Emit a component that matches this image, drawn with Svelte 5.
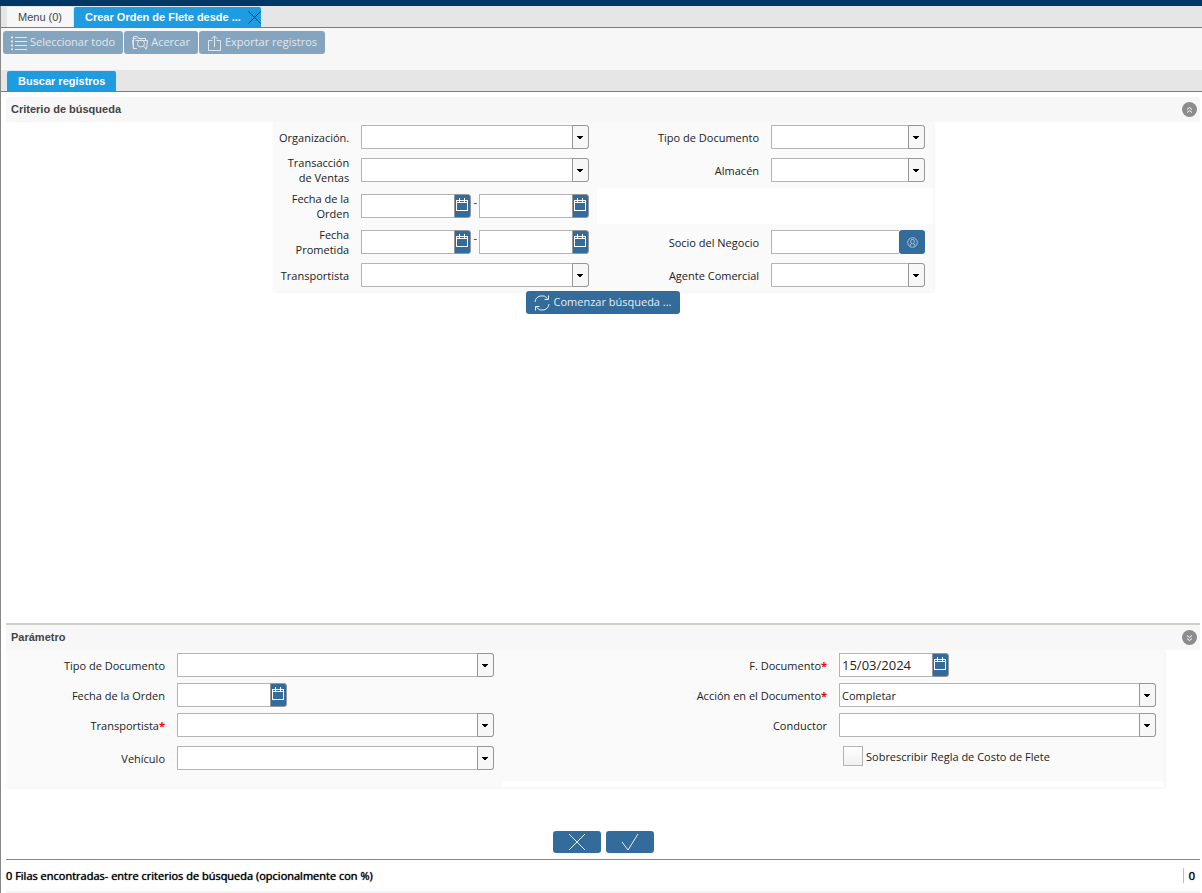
<script lang="ts">
  type Kind = 'select' | 'date' | 'range' | 'lookup' | 'check' | 'none';

  interface Field {
    id: string;
    kind: Kind;
    label: string;
    required?: boolean;
    value?: string;
  }

  // Listed row by row: left field, right field
  const criteria: Field[] = [
    { id: 'org', kind: 'select', label: 'Organización.' },
    { id: 'doctype', kind: 'select', label: 'Tipo de Documento' },
    { id: 'sales', kind: 'select', label: 'Transacción de Ventas' },
    { id: 'warehouse', kind: 'select', label: 'Almacén' },
    { id: 'ordered', kind: 'range', label: 'Fecha de la Orden' },
    { id: 'blank', kind: 'none', label: '' },
    { id: 'promised', kind: 'range', label: 'Fecha Prometida' },
    { id: 'partner', kind: 'lookup', label: 'Socio del Negocio' },
    { id: 'shipper', kind: 'select', label: 'Transportista' },
    { id: 'agent', kind: 'select', label: 'Agente Comercial' }
  ];

  const parameters: Field[] = [
    { id: 'p-doctype', kind: 'select', label: 'Tipo de Documento' },
    { id: 'p-docdate', kind: 'date', label: 'F. Documento', required: true, value: '15/03/2024' },
    { id: 'p-ordered', kind: 'date', label: 'Fecha de la Orden' },
    { id: 'p-action', kind: 'select', label: 'Acción en el Documento', required: true, value: 'Completar' },
    { id: 'p-shipper', kind: 'select', label: 'Transportista', required: true },
    { id: 'p-driver', kind: 'select', label: 'Conductor' },
    { id: 'p-vehicle', kind: 'select', label: 'Vehículo' },
    { id: 'p-override', kind: 'check', label: 'Sobrescribir Regla de Costo de Flete' }
  ];
</script>

{#snippet dateBox(id: string, value: string, label: string)}
  <div class="date-box">
    <input {id} type="text" {value} aria-label={label} />
    <button type="button" aria-label="Calendario">
      <svg width="12" height="13" viewBox="0 0 12 13" fill="none" stroke="currentColor" shape-rendering="crispEdges">
        <path d="M.5 2.500h11v10H.5zM1 4.500h10M3.500 0v4M8.500 0v4" />
      </svg>
    </button>
  </div>
{/snippet}

{#snippet fieldCells(f: Field)}
  {#if f.kind === 'none'}
    <div class="blank"></div>
  {:else if f.kind === 'check'}
    <div></div>
    <div class="cell check">
      <input id={f.id} type="checkbox" />
      <label for={f.id}>{f.label}</label>
    </div>
  {:else}
    <label class="caption" for={f.id}>{f.label}{#if f.required}<span class="required">*</span>{/if}</label>
    <div class="cell">
      {#if f.kind === 'select'}
        <div class="combo">
          <select id={f.id}>
            <option>{f.value ?? ''}</option>
          </select>
          <span class="arrow">
            <svg width="6" height="3" viewBox="0 0 6 3" shape-rendering="crispEdges"><path d="M0 0h6v1H5v1H4v1H2V2H1V1H0z" /></svg>
          </span>
        </div>
      {:else if f.kind === 'range'}
        <div class="range">
          {@render dateBox(f.id, '', f.label)}
          <span>-</span>
          {@render dateBox(f.id + '-to', '', f.label)}
        </div>
      {:else if f.kind === 'date'}
        {@render dateBox(f.id, f.value ?? '', f.label)}
      {:else}
        <div class="lookup">
          <input id={f.id} type="text" />
          <button type="button" aria-label="Buscar socio">
            <svg width="11" height="11" viewBox="0 0 11 11" fill="none" stroke="currentColor">
              <circle cx="5.5" cy="5.5" r="4.8" />
              <path d="M3.2 9.4V7.7l1.3-.8M7.8 9.4V7.7l-1.3-.8" />
              <rect x="3.8" y="2.4" width="3.4" height="4.4" rx="1.5" />
            </svg>
          </button>
        </div>
      {/if}
    </div>
  {/if}
{/snippet}

<div class="app">
  <div class="top-bar"></div>
  <div class="window">
    <nav class="tabs">
      <button type="button" class="tab">Menu (0)</button>
      <div class="tab active closable">
        <button type="button" class="tab-title">Crear Orden de Flete desde ...</button>
        <button type="button" class="close" aria-label="Cerrar">
          <svg width="13" height="13" viewBox="0 0 13 13" stroke="#0b2c45" fill="none"><path d="M.5.5l12 12M12.5.5l-12 12" /></svg>
        </button>
      </div>
    </nav>

    <div class="toolbar">
      <button type="button" class="btn" disabled>
        <svg width="16" height="14" viewBox="0 0 16 14" fill="none" stroke="currentColor">
          <path d="M4 1.5h12M4 5.5h12M4 9.5h12M4 13.5h12" />
          <path d="M0 1.5h3M0 5.5h3M0 9.5h3M0 13.5h3" stroke-width="2" stroke-dasharray="2 1" />
        </svg>
        Seleccionar todo
      </button>
      <button type="button" class="btn" disabled>
        <svg width="16" height="15" viewBox="0 0 16 15" fill="none" stroke="currentColor">
          <path d="M5 13.500H1.500V1.500h4l1 2h7v2M.5 3.500h4M3.500 5.500h12l-1 8h-1M.5 5l1 8.500" />
          <circle cx="9" cy="8.500" r="3.500" />
          <path d="M11.500 11l3 3.500" />
        </svg>
        Acercar
      </button>
      <button type="button" class="btn" disabled>
        <svg width="15" height="16" viewBox="0 0 15 16" fill="none" stroke="currentColor">
          <path d="M5.500 5.500h-4v10h12v-10h-4M7.500 12V1M4.500 4l3-3 3 3" />
        </svg>
        Exportar registros
      </button>
    </div>

    <nav class="tabs">
      <button type="button" class="tab active">Buscar registros</button>
    </nav>

    <main>
      <section class="search">
        <header>
          <h2>Criterio de búsqueda</h2>
          <button type="button" class="toggle" aria-label="Contraer">
            <svg width="7" height="8" viewBox="0 0 7 8" fill="none" stroke="#fff"><path d="M1 3.500l2.500-2 2.500 2M1 6.500l2.500-2 2.500 2" /></svg>
          </button>
        </header>
        <div class="panel criteria">
          {#each criteria as f (f.id)}
            {@render fieldCells(f)}
          {/each}
        </div>
        <button type="button" class="btn start">
          <svg width="16" height="16" viewBox="0 0 16 16" fill="none" stroke="currentColor">
            <path d="M1 7a7 7 0 0 1 12.500-3.500M15 9a7 7 0 0 1-12.500 3.500M14.500.5v4h-4M1.500 15.500v-4h4" />
          </svg>
          Comenzar búsqueda ...
        </button>
      </section>

      <section class="params">
        <header>
          <h2>Parámetro</h2>
          <button type="button" class="toggle" aria-label="Contraer">
            <svg width="7" height="8" viewBox="0 0 7 8" fill="none" stroke="#fff"><path d="M1 1.500l2.500 2 2.500-2M1 4.500l2.500 2 2.500-2" /></svg>
          </button>
        </header>
        <div class="panel parameters">
          {#each parameters as f (f.id)}
            {@render fieldCells(f)}
          {/each}
          <div class="blank"></div>
        </div>
      </section>

      <div class="actions">
        <button type="button" class="btn" aria-label="Cancelar">
          <svg width="18" height="18" viewBox="0 0 18 18" fill="none" stroke="currentColor"><path d="M1 1l16 16M17 1L1 17" /></svg>
        </button>
        <button type="button" class="btn" aria-label="Aceptar">
          <svg width="18" height="18" viewBox="0 0 18 18" fill="none" stroke="currentColor"><path d="M1 9l6 8L17 1" /></svg>
        </button>
      </div>
    </main>

    <footer>
      <span>0 Filas encontradas- entre criterios de búsqueda (opcionalmente con %)</span>
      <span class="count">0</span>
    </footer>
  </div>
</div>

<style>
  :global(body) {
    margin: 0;
    background: #fff;
  }

  .app {
    display: flex;
    flex-direction: column;
    min-height: 100vh;
    font: 11px/15px 'Open Sans', sans-serif;
    color: #222;
  }

  .app * {
    box-sizing: border-box;
  }

  button,
  input,
  select {
    margin: 0;
    padding: 0;
    border: 0;
    border-radius: 0;
    background: none;
    font: inherit;
    color: inherit;
  }

  svg {
    display: block;
    flex: none;
  }

  .top-bar {
    height: 6px;
    background: #003764;
  }

  .window {
    flex: 1;
    display: flex;
    flex-direction: column;
    border-left: 1px solid #888;
  }

  .tabs {
    display: flex;
    gap: 1px;
    height: 22px;
    padding: 1px 0 0 6px;
    background: #e6e6e6;
    border-bottom: 1px solid #2a94d6;
  }

  .tab {
    padding: 0 11px;
    background: #f7f7f7;
    font-family: 'Liberation Sans', Arial, sans-serif;
    color: #444;
  }

  .tab.active {
    background: #1f9be0;
    border-radius: 2px 2px 0 0;
    font-weight: bold;
    color: #fff;
  }

  .closable {
    display: flex;
    align-items: center;
    gap: 7px;
    padding-right: 0;
  }

  .toolbar {
    display: flex;
    align-items: flex-start;
    gap: 1px;
    height: 42px;
    padding: 3px 2px;
    background: #f7f7f7;
  }

  .btn {
    display: flex;
    align-items: center;
    justify-content: center;
    gap: 3px;
    height: 23px;
    padding: 0 8px 2px;
    border-radius: 3px;
    background: #336b9b;
    color: #e6eef5;
  }

  .btn svg {
    margin-top: 2px;
  }

  .btn:disabled {
    background: #85a4be;
    color: #e0e8ef;
  }

  main {
    flex: 1;
    display: flex;
    flex-direction: column;
    padding: 5px 2px 6px 5px;
  }

  .search {
    flex: 1;
    display: flex;
    flex-direction: column;
    align-items: center;
    padding-bottom: 16px;
  }

  header {
    display: flex;
    align-items: center;
    justify-content: space-between;
    width: 100%;
    height: 25px;
    padding: 0 3px 0 5px;
    background: #f7f7f7;
  }

  h2 {
    margin: 0;
    font: bold 11px/15px 'Liberation Sans', Arial, sans-serif;
    color: #444;
  }

  .toggle {
    display: flex;
    align-items: center;
    justify-content: center;
    width: 15px;
    height: 15px;
    border-radius: 50%;
    background: #8c8c8c;
  }

  .panel {
    display: grid;
    align-items: center;
    background: #fafafa;
    box-shadow: 1px 1px 3px #f0f0f0;
  }

  .criteria {
    grid-template-columns: 88fr 236fr 174fr 162fr;
    width: 55%;
    min-width: 660px;
    padding-bottom: 1px;
  }

  .parameters {
    grid-template-columns: 171fr 325fr 337fr 325fr;
    margin-right: 36px;
  }

  .caption {
    padding: 3px 12px 3px 6px;
    text-align: right;
  }

  .required {
    color: #f00;
    font-weight: bold;
  }

  .cell {
    min-width: 0;
    padding: 3px 8px 3px 0;
  }

  .blank {
    grid-column: 3 / 5;
    align-self: stretch;
    min-height: 6px;
    background: #fff;
  }

  .parameters > :nth-last-child(-n + 5):not(.blank) {
    margin: 3px 0 8px;
  }

  .combo {
    position: relative;
  }

  .combo select {
    display: block;
    width: 100%;
    height: 24px;
    padding: 0 20px 0 2px;
    border: 1px solid #b4b4b4;
    border-radius: 0 3px 3px 0;
    background: #fff;
    appearance: none;
  }

  .arrow {
    position: absolute;
    top: 0;
    right: 0;
    bottom: 0;
    display: flex;
    align-items: center;
    justify-content: center;
    width: 17px;
    padding-right: 1px;
    border: 1px solid #969696;
    border-radius: 0 3px 3px 0;
    background: #f7f7f7;
    pointer-events: none;
  }

  .date-box {
    display: flex;
    width: 110px;
    height: 24px;
  }

  .date-box input,
  .lookup input {
    flex: 1;
    min-width: 0;
    padding: 0 2px;
    border: 1px solid #b4b4b4;
    border-right: 0;
    background: #fff;
  }

  .date-box input {
    font-size: 13px;
  }

  .date-box button {
    display: flex;
    width: 17px;
    padding: 3px 0 0 1px;
    border: 1px solid #969696;
    border-radius: 0 3px 3px 0;
    background: #336b9b;
    color: #fff;
  }

  .range {
    display: flex;
    justify-content: space-between;
  }

  .lookup {
    display: flex;
    height: 24px;
  }

  .lookup button {
    display: flex;
    align-items: center;
    justify-content: center;
    width: 26px;
    border-radius: 3px;
    background: #336b9b;
    color: #a9c3d9;
  }

  .check {
    display: flex;
    align-items: center;
    align-self: start;
    gap: 3px;
    padding-left: 4px;
  }

  .check input {
    width: 20px;
    height: 20px;
    border: 1px solid #b4b4b4;
    background: linear-gradient(#fefefe, #f0f0f0);
    appearance: none;
  }

  .check input:checked {
    background: #336b9b;
  }

  .params {
    border-top: 2px solid #cfcfca;
  }

  .actions {
    display: flex;
    justify-content: center;
    gap: 5px;
    padding-top: 44px;
  }

  .actions .btn {
    width: 48px;
    height: 22px;
  }

  footer {
    display: flex;
    align-items: center;
    justify-content: space-between;
    height: 34px;
    margin: 0 2px 0 5px;
    border-top: 1px solid #888880;
    border-bottom: 2px solid #f4f4f4;
    color: #000;
    text-shadow: 0 0 1px #000;
  }

  .count {
    padding: 0 5px;
    border-left: 1px solid #a9c0e6;
  }
</style>
